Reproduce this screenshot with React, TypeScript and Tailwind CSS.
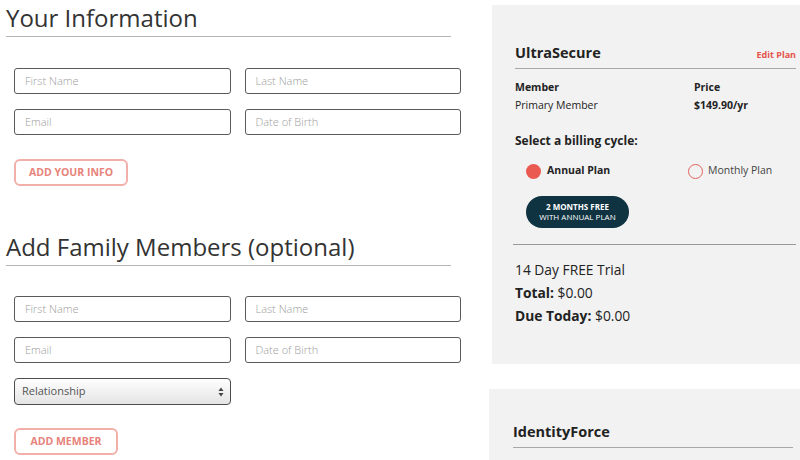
import { ReactNode } from 'react';

function Field({ placeholder }: { placeholder: string }) {
  return (
    <div className="h-[26px] border border-[#5a5a5a] rounded-[3px] bg-white flex items-center pl-[10px] text-[11px] font-light text-[#9d9d9d]">
      {placeholder}
    </div>
  );
}

function SectionHeading({ children, className = '' }: { children: ReactNode; className?: string }) {
  return (
    <h2
      className={`w-[445px] text-[24px] leading-[30px] text-[#333] border-b border-[#b5b5b5] pb-[3px] ${className}`}
    >
      {children}
    </h2>
  );
}

function OutlineButton({ label, width }: { label: string; width: string }) {
  return (
    <button
      className={`${width} h-[27px] border-2 border-[#f3b0aa] rounded-[6px] text-[10.5px] font-bold text-[#e7837b] bg-white flex items-center justify-center`}
    >
      {label}
    </button>
  );
}

function RelationshipSelect() {
  return (
    <div className="h-[27px] border border-[#4d4d4d] rounded-[4px] bg-gradient-to-b from-white to-[#e4e4e4] flex items-center justify-between pl-[7px] pr-[6px] text-[11px] text-[#555]">
      <span>Relationship</span>
      <svg width="6" height="10" viewBox="0 0 6 10" fill="#444">
        <path d="M3 0.5 L5.5 4 H0.5 Z" />
        <path d="M3 9.5 L5.5 6 H0.5 Z" />
      </svg>
    </div>
  );
}

export default function App() {
  return (
    <div
      className="w-[800px] h-[460px] overflow-hidden bg-white flex"
      style={{ fontFamily: '"Open Sans", "Liberation Sans", sans-serif' }}
    >
      {/* Left: forms */}
      <div className="w-[489px] shrink-0 pl-[6px]">
        <SectionHeading className="mt-[3px]">Your Information</SectionHeading>
        <div className="ml-[8px] mt-[31px] w-[447px] grid grid-cols-2 gap-x-[14px] gap-y-[15px]">
          <Field placeholder="First Name" />
          <Field placeholder="Last Name" />
          <Field placeholder="Email" />
          <Field placeholder="Date of Birth" />
        </div>
        <div className="ml-[8px] mt-[24px]">
          <OutlineButton label="ADD YOUR INFO" width="w-[114px]" />
        </div>

        <SectionHeading className="mt-[46px]">Add Family Members (optional)</SectionHeading>
        <div className="ml-[8px] mt-[30px] w-[447px] grid grid-cols-2 gap-x-[14px] gap-y-[15px]">
          <Field placeholder="First Name" />
          <Field placeholder="Last Name" />
          <Field placeholder="Email" />
          <Field placeholder="Date of Birth" />
          <RelationshipSelect />
        </div>
        <div className="ml-[8px] mt-[23px]">
          <OutlineButton label="ADD MEMBER" width="w-[104px]" />
        </div>
      </div>

      {/* Right: plan summary */}
      <div className="flex-1 flex flex-col">
        <div className="ml-[3px] mt-[5px] bg-[#f2f2f2] pl-[23px] pr-[4px] pt-[38px] pb-[37px] text-[#222]">
          <div className="flex items-baseline justify-between border-b border-[#a8a8a8] pb-[5px]">
            <span className="text-[14.5px] leading-[20px] font-bold">UltraSecure</span>
            <span className="text-[9px] font-bold text-[#e5534b]">Edit Plan</span>
          </div>

          <div className="mt-[9px] flex text-[10.5px] leading-[18px]">
            <div className="w-[179px]">
              <div className="font-bold">Member</div>
              <div>Primary Member</div>
            </div>
            <div>
              <div className="font-bold">Price</div>
              <div className="font-bold">$149.90/yr</div>
            </div>
          </div>

          <div className="mt-[18px] text-[12px] leading-[18px] font-bold">Select a billing cycle:</div>

          <div className="mt-[13px] flex items-center text-[10.5px] h-[16px]">
            <div className="ml-[11px] w-[162px] flex items-center gap-[6px]">
              <span className="w-[15px] h-[15px] rounded-full bg-[#ea5a50]" />
              <span className="font-bold">Annual Plan</span>
            </div>
            <div className="flex items-center gap-[5px]">
              <span className="w-[15px] h-[15px] rounded-full border-[1.5px] border-[#e2615a]" />
              <span className="text-[#444]">Monthly Plan</span>
            </div>
          </div>

          <div className="ml-[11px] mt-[17px] w-[103px] h-[32px] rounded-full bg-[#0f3341] text-white flex flex-col items-center justify-center text-[8px] leading-[10px]">
            <span className="font-bold">2 MONTHS FREE</span>
            <span>WITH ANNUAL PLAN</span>
          </div>

          <div className="mt-[16px] -ml-[2px] border-t border-[#9a9a9a]" />

          <div className="mt-[13px] text-[13.8px] leading-[23px]">
            <div>14 Day FREE Trial</div>
            <div>
              <span className="font-bold">Total:</span> $0.00
            </div>
            <div>
              <span className="font-bold">Due Today:</span> $0.00
            </div>
          </div>
        </div>

        <div className="mt-[25px] bg-[#f2f2f2] pl-[24px] pr-[7px] pt-[33px] h-[80px] text-[#222]">
          <div className="text-[14.5px] leading-[20px] font-bold border-b border-[#a8a8a8] pb-[5px]">
            IdentityForce
          </div>
        </div>
      </div>
    </div>
  );
}
